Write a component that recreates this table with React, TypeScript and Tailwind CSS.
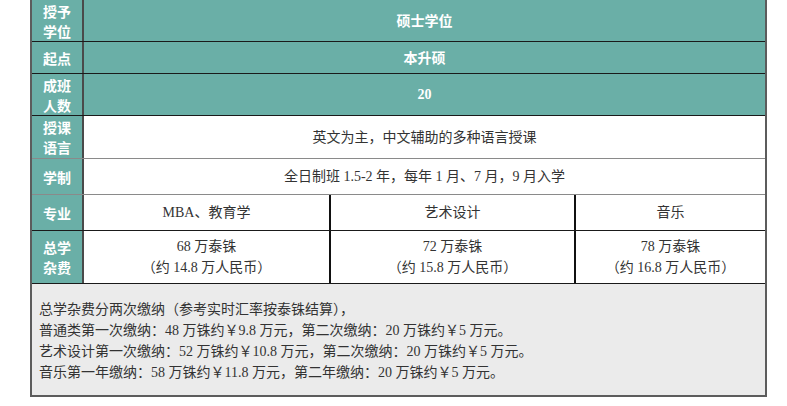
const serif = 'font-["Liberation_Serif","Noto_Sans_CJK_SC",serif]';
const sans = 'font-["Noto_Sans_CJK_SC","Liberation_Sans",sans-serif]';

const majors = [
  { name: 'MBA、教育学', fee: '68 万泰铢', rmb: '（约 14.8 万人民币）' },
  { name: '艺术设计', fee: '72 万泰铢', rmb: '（约 15.8 万人民币）' },
  { name: '音乐', fee: '78 万泰铢', rmb: '（约 16.8 万人民币）' },
];

function Label({ lines }: { lines: string[] }) {
  return (
    <div
      className={`w-[52px] shrink-0 bg-[#6aafa7] border-r-2 border-[#4a4a4a] flex flex-col items-center justify-center text-white font-bold text-[14px] leading-[20px] ${sans}`}
    >
      {lines.map((l) => (
        <span key={l}>{l}</span>
      ))}
    </div>
  );
}

export default function App() {
  return (
    <div className="w-[787px] h-[406px] bg-white overflow-hidden">
      <div className="ml-[30px] w-[737px] border-x-2 border-b-2 border-[#5c5c5c]">
        {/* teal rows */}
        <div className="flex h-[42px] border-b border-[#1a1a1a] bg-[#6aafa7]">
          <Label lines={['授予', '学位']} />
          <div className={`flex-1 flex items-center justify-center text-white font-bold text-[14px] ${sans}`}>
            硕士学位
          </div>
        </div>
        <div className="flex h-[32px] border-b border-[#1a1a1a] bg-[#6aafa7]">
          <Label lines={['起点']} />
          <div className={`flex-1 flex items-center justify-center text-white font-bold text-[14px] ${sans}`}>
            本升硕
          </div>
        </div>
        <div className="flex h-[42px] border-b border-[#1a1a1a] bg-[#6aafa7]">
          <Label lines={['成班', '人数']} />
          <div className={`flex-1 flex items-center justify-center text-white font-bold text-[14px] ${serif}`}>
            20
          </div>
        </div>

        {/* white rows */}
        <div className="flex h-[43px] border-b border-[#8a8a8a]">
          <Label lines={['授课', '语言']} />
          <div className={`flex-1 flex items-center justify-center text-[#333] text-[14px] ${serif}`}>
            英文为主，中文辅助的多种语言授课
          </div>
        </div>
        <div className="flex h-[36px] border-b border-[#8a8a8a]">
          <Label lines={['学制']} />
          <div className={`flex-1 flex items-center justify-center text-[#333] text-[14px] ${serif}`}>
            全日制班 1.5-2 年，每年 1 月、7 月，9 月入学
          </div>
        </div>
        <div className="flex h-[36px] border-b border-[#1a1a1a]">
          <Label lines={['专业']} />
          <div className="flex-1 grid grid-cols-[247px_245px_1fr]">
            {majors.map((m, i) => (
              <div
                key={m.name}
                className={`flex items-center justify-center text-[#333] text-[14px] ${serif} ${i < 2 ? 'border-r-2 border-[#111]' : ''}`}
              >
                {m.name}
              </div>
            ))}
          </div>
        </div>
        <div className="flex h-[53px] border-b border-[#1a1a1a]">
          <Label lines={['总学', '杂费']} />
          <div className="flex-1 grid grid-cols-[247px_245px_1fr]">
            {majors.map((m, i) => (
              <div
                key={m.name}
                className={`flex flex-col items-center justify-center text-[#333] text-[14px] leading-[21px] ${serif} ${i < 2 ? 'border-r-2 border-[#111]' : ''}`}
              >
                <span>{m.fee}</span>
                <span>{m.rmb}</span>
              </div>
            ))}
          </div>
        </div>

        {/* footer notes */}
        <div className={`h-[111px] bg-[#ebebeb] pl-[7px] pt-[15px] text-[#333] text-[14px] leading-[21px] ${serif}`}>
          <p>总学杂费分两次缴纳（参考实时汇率按泰铢结算），</p>
          <p>普通类第一次缴纳：48 万铢约￥9.8 万元，第二次缴纳：20 万铢约￥5 万元。</p>
          <p>艺术设计第一次缴纳：52 万铢约￥10.8 万元，第二次缴纳：20 万铢约￥5 万元。</p>
          <p>音乐第一年缴纳：58 万铢约￥11.8 万元，第二年缴纳：20 万铢约￥5 万元。</p>
        </div>
      </div>
    </div>
  );
}
